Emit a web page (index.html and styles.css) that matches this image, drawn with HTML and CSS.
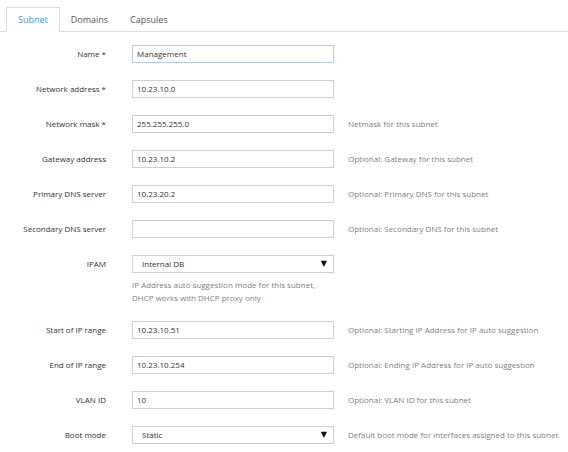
FILE: index.html
```html
<!DOCTYPE html>
<html>
<head>
<meta charset="utf-8">
<link rel="stylesheet" href="styles.css">
</head>
<body>
<div class="tabs">
  <div class="tab active">Subnet</div>
  <div class="tab">Domains</div>
  <div class="tab">Capsules</div>
</div>
<form class="form">
  <label class="lbl">Name *</label>
  <div class="field"><div class="input focus">Management</div></div>
  <div class="help"></div>

  <label class="lbl">Network address *</label>
  <div class="field"><div class="input">10.23.10.0</div></div>
  <div class="help"></div>

  <label class="lbl">Network mask *</label>
  <div class="field"><div class="input">255.255.255.0</div></div>
  <div class="help">Netmask for this subnet</div>

  <label class="lbl">Gateway address</label>
  <div class="field"><div class="input">10.23.10.2</div></div>
  <div class="help">Optional: Gateway for this subnet</div>

  <label class="lbl">Primary DNS server</label>
  <div class="field"><div class="input">10.23.20.2</div></div>
  <div class="help">Optional: Primary DNS for this subnet</div>

  <label class="lbl">Secondary DNS server</label>
  <div class="field"><div class="input"></div></div>
  <div class="help">Optional: Secondary DNS for this subnet</div>

  <label class="lbl">IPAM</label>
  <div class="field">
    <div class="input select"><span>Internal DB</span><span class="arrow">▼</span></div>
    <div class="below">IP Address auto suggestion mode for this subnet,<br>DHCP works with DHCP proxy only</div>
  </div>
  <div class="help"></div>

  <label class="lbl">Start of IP range</label>
  <div class="field"><div class="input">10.23.10.51</div></div>
  <div class="help">Optional: Starting IP Address for IP auto suggestion</div>

  <label class="lbl">End of IP range</label>
  <div class="field"><div class="input">10.23.10.254</div></div>
  <div class="help">Optional: Ending IP Address for IP auto suggestion</div>

  <label class="lbl">VLAN ID</label>
  <div class="field"><div class="input">10</div></div>
  <div class="help">Optional: VLAN ID for this subnet</div>

  <label class="lbl">Boot mode</label>
  <div class="field">
    <div class="input select"><span>Static</span><span class="arrow">▼</span></div>
  </div>
  <div class="help">Default boot mode for interfaces assigned to this subnet</div>
</form>
</body>
</html>
```
FILE: styles.css
```css
html, body {
  margin: 0;
  padding: 0;
  background: #fff;
  font-family: "Open Sans", "DejaVu Sans", sans-serif;
  font-size: 8px;
  color: #444;
}
.tabs {
  display: flex;
  padding: 7px 0 0 6px;
  border-bottom: 1px solid #dcdcdc;
  height: 24px;
}
.tab {
  font-size: 9px;
  color: #555;
  padding: 0 10px;
  line-height: 23px;
  height: 24px;
  box-sizing: border-box;
  border: 1px solid transparent;
  border-bottom: none;
}
.tab.active {
  color: #3d9ad1;
  border-color: #dcdcdc;
  background: #fff;
  margin-bottom: -1px;
  height: 25px;
  padding: 0 11px;
}
.form {
  display: grid;
  grid-template-columns: 106px 202px 1fr;
  column-gap: 26px;
  row-gap: 17px;
  padding-top: 13px;
  margin: 0;
}
.form > .help { margin-left: -12px; }
.lbl {
  text-align: right;
  color: #333;
  line-height: 18px;
  height: 18px;
  white-space: nowrap;
}
.input {
  height: 18px;
  box-sizing: border-box;
  border: 1px solid #cfcfcf;
  padding: 0 4px;
  line-height: 16px;
  color: #333;
  background: #fff;
}
.input.focus {
  border-color: #b3cfdd;
}
.select {
  display: flex;
  justify-content: space-between;
  padding-left: 9px;
  padding-right: 6px;
}
.arrow {
  color: #111;
  font-size: 8px;
  font-family: "DejaVu Sans", sans-serif;
}
.below {
  margin-top: 5px;
  line-height: 13px;
  color: #808080;
}
.help {
  color: #808080;
  line-height: 18px;
  white-space: nowrap;
}
```
